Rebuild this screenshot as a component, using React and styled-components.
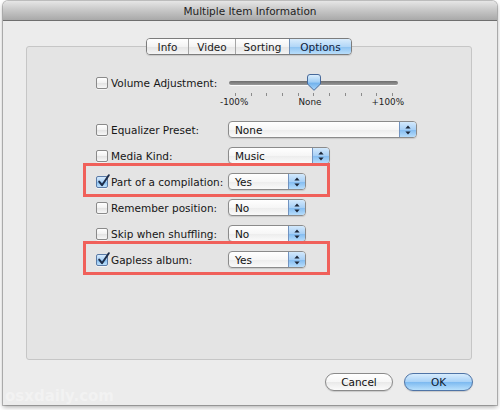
import React from 'react';
import styled, { createGlobalStyle, css } from 'styled-components';

const Global = createGlobalStyle`
  html, body { margin: 0; padding: 0; background: #ffffff; }
  body {
    font-family: "DejaVu Sans", "Liberation Sans", sans-serif;
    font-size: 10.5px;
    color: #161616;
  }
`;

const Page = styled.div`
  width: 500px;
  height: 410px;
  box-sizing: border-box;
  padding: 1px 3px 0 3px;
  background: #ffffff;
  overflow: hidden;
`;

const Window = styled.div`
  position: relative;
  width: 494px;
  height: 404px;
  background: #ececec;
  border-radius: 5px 5px 0 0;
  box-shadow: 0 0 0 1px rgba(0, 0, 0, 0.22), 0 2px 5px rgba(0, 0, 0, 0.35);
  display: flex;
  flex-direction: column;
  overflow: hidden;
`;

const TitleBar = styled.div`
  height: 19px;
  flex: none;
  border-bottom: 1px solid #6f6f6f;
  background: linear-gradient(#e6e6e6, #c6c6c6 50%, #a9a9a9);
  border-radius: 5px 5px 0 0;
  display: flex;
  align-items: center;
  justify-content: center;
  color: #222;
  font-size: 10.5px;
`;

const Body = styled.div`
  flex: 1;
  display: flex;
  flex-direction: column;
  padding: 17px 25px 0 23px;
`;

const TabsRow = styled.div`
  display: flex;
  justify-content: center;
  margin-bottom: -9px;
  position: relative;
  z-index: 1;
`;

const Segmented = styled.div`
  display: flex;
  height: 17px;
  box-sizing: border-box;
  border: 1px solid #7c7c7c;
  border-radius: 4px;
  overflow: hidden;
  box-shadow: 0 1px 1px rgba(0, 0, 0, 0.12);
`;

const Tab = styled.div`
  width: ${p => p.$w}px;
  display: flex;
  align-items: center;
  justify-content: center;
  box-sizing: border-box;
  border-left: ${p => (p.$first ? 'none' : '1px solid #a5a5a5')};
  background: linear-gradient(#ffffff, #f3f3f3 50%, #e4e4e4 51%, #f4f4f4);
  color: #1a1a1a;
  ${p =>
    p.$active &&
    css`
      background: linear-gradient(#d9ecfc, #b3d7f7 50%, #8cc2f1 51%, #b9defb);
      border-left-color: #6f8fb6;
      color: #10203a;
    `}
`;

const GroupBox = styled.div`
  height: 314px;
  box-sizing: border-box;
  border: 1px solid #c6c6c6;
  border-radius: 3px;
  background: #e4e4e4;
  padding: 27px 0 0 69px;
  display: flex;
  flex-direction: column;
  gap: 9px;
`;

const Row = styled.div`
  position: relative;
  display: grid;
  grid-template-columns: 132px auto;
  align-items: center;
  height: 17px;
  ${p =>
    p.$highlight &&
    css`
      &::after {
        content: '';
        position: absolute;
        left: -13px;
        top: -10px;
        width: 247px;
        height: 34px;
        box-sizing: border-box;
        border: 3px solid #f0605a;
        pointer-events: none;
      }
    `}
`;

const VolumeRow = styled.div`
  display: grid;
  grid-template-columns: 132px auto;
  align-items: start;
  height: 32px;
  margin-bottom: 6px;
`;

const LabelCell = styled.label`
  display: flex;
  align-items: center;
  gap: 3px;
  height: 17px;
  white-space: nowrap;
`;

const Box = styled.span`
  width: 12px;
  height: 12px;
  box-sizing: border-box;
  border: 1px solid #8a8a8a;
  border-radius: 2px;
  background: linear-gradient(#ffffff, #f1f1f1 50%, #e3e3e3 51%, #f7f7f7);
  position: relative;
  flex: none;
  box-shadow: 0 1px 0 rgba(255, 255, 255, 0.6);
  ${p =>
    p.$checked &&
    css`
      border-color: #5a7aa6;
      background: linear-gradient(#d6eafc, #a9d1f6 50%, #86bef0 51%, #bfe1fb);
    `}
`;

const CheckMark = styled.svg`
  position: absolute;
  left: 0px;
  top: -3px;
  width: 13px;
  height: 14px;
  overflow: visible;
`;

const SliderBlock = styled.div`
  display: flex;
  flex-direction: column;
  width: 176px;
`;

const TrackArea = styled.div`
  position: relative;
  height: 17px;
  display: flex;
  align-items: center;
`;

const Track = styled.div`
  margin-left: 1px;
  width: 169px;
  height: 4px;
  border-radius: 2px;
  background: linear-gradient(#6d6d6d, #9a9a9a);
  box-shadow: 0 1px 0 rgba(255, 255, 255, 0.8);
`;

const Thumb = styled.svg`
  position: absolute;
  left: 79px;
  top: 0px;
  width: 14px;
  height: 17px;
`;

const Ticks = styled.div`
  display: flex;
  justify-content: space-between;
  margin: 2px 0 0 7px;
  width: 158px;
  height: 3px;
`;

const Tick = styled.span`
  width: 1px;
  height: 3px;
  background: #8b8b8b;
`;

const TickLabels = styled.div`
  display: flex;
  justify-content: space-between;
  margin-left: -8px;
  width: 184px;
  font-size: 8.8px;
  line-height: 10px;
  margin-top: 1px;
  color: #222;
`;

const Popup = styled.div`
  width: ${p => p.$w}px;
  height: 17px;
  box-sizing: border-box;
  border: 1px solid #8b8b8b;
  border-radius: 4px;
  background: linear-gradient(#ffffff, #f6f6f6 50%, #ececec 51%, #fafafa);
  display: flex;
  overflow: hidden;
  box-shadow: 0 1px 1px rgba(0, 0, 0, 0.12);
`;

const PopupText = styled.span`
  flex: 1;
  padding-left: 6px;
  display: flex;
  align-items: center;
  color: #111;
`;

const Stepper = styled.span`
  width: 16px;
  flex: none;
  border-left: 1px solid #7193c0;
  background: linear-gradient(#d3e9fc, #a8d0f6 50%, #80baf0 51%, #b7ddfb);
  display: flex;
  align-items: center;
  justify-content: center;
`;

const ButtonRow = styled.div`
  display: flex;
  justify-content: flex-end;
  gap: 11px;
  margin-top: 13px;
  margin-right: -1px;
`;

const Button = styled.button`
  width: ${p => p.$w}px;
  height: 18px;
  padding: 0;
  border-radius: 9px;
  border: 1px solid #8a8a8a;
  font-family: inherit;
  font-size: 10.5px;
  color: #111;
  background: linear-gradient(#ffffff, #f6f6f6 50%, #e9e9e9 51%, #fbfbfb);
  box-shadow: 0 1px 1px rgba(0, 0, 0, 0.15);
  ${p =>
    p.$primary &&
    css`
      border-color: #4f74a6;
      background: linear-gradient(#d7ecfd, #a7d1f7 50%, #7cb9f0 51%, #b8e0fc);
      color: #0d1a30;
    `}
`;

const Watermark = styled.div`
  position: absolute;
  left: 2px;
  bottom: 1px;
  font-family: "DejaVu Sans", sans-serif;
  font-size: 15px;
  font-weight: bold;
  color: rgba(0, 0, 0, 0.018);
  text-shadow: 0 1px 0 rgba(255, 255, 255, 0.35);
  pointer-events: none;
`;

function Check({ checked, children }) {
  return (
    <LabelCell>
      <Box $checked={checked}>
        {checked && (
          <CheckMark viewBox="0 0 13 14">
            <path d="M2.2 7.6 L5 11.2 L11.8 1.2" fill="none" stroke="#1d2d4a" strokeWidth="2" strokeLinecap="round" strokeLinejoin="round" />
          </CheckMark>
        )}
      </Box>
      {children}
    </LabelCell>
  );
}

function Arrows() {
  return (
    <svg width="6" height="10" viewBox="0 0 6 10">
      <path d="M3 0.5 L5.6 3.6 H0.4 Z" fill="#1b2536" />
      <path d="M3 9.5 L5.6 6.4 H0.4 Z" fill="#1b2536" />
    </svg>
  );
}

function Select({ value, w }) {
  return (
    <Popup $w={w}>
      <PopupText>{value}</PopupText>
      <Stepper>
        <Arrows />
      </Stepper>
    </Popup>
  );
}

const tabs = [
  { label: 'Info', w: 41 },
  { label: 'Video', w: 47 },
  { label: 'Sorting', w: 54 },
  { label: 'Options', w: 62, active: true },
];

const rows = [
  { label: 'Equalizer Preset:', value: 'None', w: 189 },
  { label: 'Media Kind:', value: 'Music', w: 102 },
  { label: 'Part of a compilation:', value: 'Yes', w: 78, checked: true, highlight: true },
  { label: 'Remember position:', value: 'No', w: 78 },
  { label: 'Skip when shuffling:', value: 'No', w: 78 },
  { label: 'Gapless album:', value: 'Yes', w: 78, checked: true, highlight: true },
];

export default function App() {
  return (
    <>
      <Global />
      <Page>
        <Window>
          <TitleBar>Multiple Item Information</TitleBar>
          <Body>
            <TabsRow>
              <Segmented>
                {tabs.map((t, i) => (
                  <Tab key={t.label} $w={t.w} $first={i === 0} $active={t.active}>
                    {t.label}
                  </Tab>
                ))}
              </Segmented>
            </TabsRow>
            <GroupBox>
              <VolumeRow>
                <Check>Volume Adjustment:</Check>
                <SliderBlock>
                  <TrackArea>
                    <Track />
                    <Thumb viewBox="0 0 14 17">
                      <defs>
                        <linearGradient id="thumbg" x1="0" y1="0" x2="0" y2="1">
                          <stop offset="0" stopColor="#dff0fd" />
                          <stop offset="0.5" stopColor="#9ccbf4" />
                          <stop offset="0.52" stopColor="#6fb0ec" />
                          <stop offset="1" stopColor="#a9d6fa" />
                        </linearGradient>
                      </defs>
                      <path d="M3 0.5 H11 Q13.5 0.5 13.5 3 V10 L7 16.3 L0.5 10 V3 Q0.5 0.5 3 0.5 Z" fill="url(#thumbg)" stroke="#47699a" strokeWidth="1" />
                    </Thumb>
                  </TrackArea>
                  <Ticks>
                    {Array.from({ length: 11 }).map((_, i) => (
                      <Tick key={i} />
                    ))}
                  </Ticks>
                  <TickLabels>
                    <span>-100%</span>
                    <span>None</span>
                    <span>+100%</span>
                  </TickLabels>
                </SliderBlock>
              </VolumeRow>
              {rows.map(r => (
                <Row key={r.label} $highlight={r.highlight}>
                  <Check checked={r.checked}>{r.label}</Check>
                  <Select value={r.value} w={r.w} />
                </Row>
              ))}
            </GroupBox>
            <ButtonRow>
              <Button $w={68}>Cancel</Button>
              <Button $w={69} $primary>OK</Button>
            </ButtonRow>
          </Body>
          <Watermark>osxdaily.com</Watermark>
        </Window>
      </Page>
    </>
  );
}
